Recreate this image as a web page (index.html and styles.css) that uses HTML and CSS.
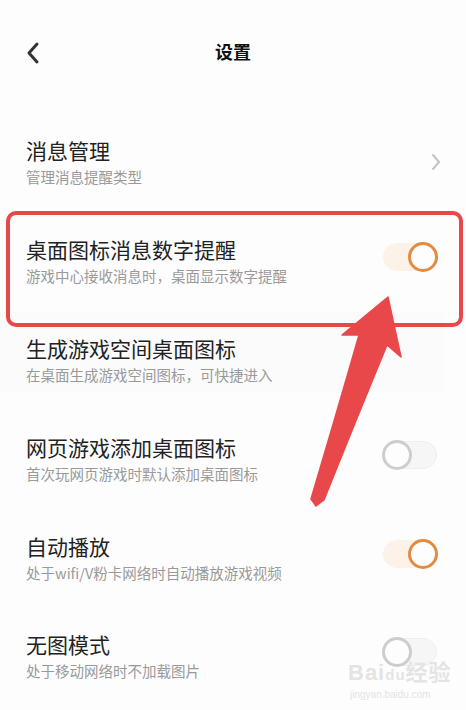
FILE: index.html
```html
<!DOCTYPE html>
<html lang="zh-CN">
<head>
    <meta charset="UTF-8">
    <meta name="viewport" content="width=device-width, initial-scale=1.0">
    <title>设置</title>
    <link rel="stylesheet" href="styles.css">
</head>
<body>
    <div class="page">
        <div class="top-bar">
            <button class="back-button">
                <svg width="16" height="24" viewBox="0 0 16 24" fill="none" stroke="currentColor" stroke-width="3" stroke-linecap="round" stroke-linejoin="round">
                    <polyline points="12,3 4,12 12,21"/>
                </svg>
            </button>
            <h1 class="page-title">设置</h1>
        </div>

        <div class="setting-list">
            <div class="setting-row">
                <div class="setting-text">
                    <div class="setting-title">消息管理</div>
                    <div class="setting-desc">管理消息提醒类型</div>
                </div>
                <svg class="chevron" width="12" height="18" viewBox="0 0 12 18" fill="none" stroke="currentColor" stroke-width="2" stroke-linecap="round" stroke-linejoin="round">
                    <polyline points="3,2 9,9 3,16"/>
                </svg>
            </div>

            <div class="setting-row">
                <div class="setting-text">
                    <div class="setting-title">桌面图标消息数字提醒</div>
                    <div class="setting-desc">游戏中心接收消息时，桌面显示数字提醒</div>
                </div>
                <div class="switch on"><span class="knob"></span></div>
            </div>

            <div class="setting-row shaded">
                <div class="setting-text">
                    <div class="setting-title">生成游戏空间桌面图标</div>
                    <div class="setting-desc">在桌面生成游戏空间图标，可快捷进入</div>
                </div>
            </div>

            <div class="setting-row">
                <div class="setting-text">
                    <div class="setting-title">网页游戏添加桌面图标</div>
                    <div class="setting-desc">首次玩网页游戏时默认添加桌面图标</div>
                </div>
                <div class="switch"><span class="knob"></span></div>
            </div>

            <div class="setting-row">
                <div class="setting-text">
                    <div class="setting-title">自动播放</div>
                    <div class="setting-desc">处于wifi/V粉卡网络时自动播放游戏视频</div>
                </div>
                <div class="switch on"><span class="knob"></span></div>
            </div>

            <div class="setting-row">
                <div class="setting-text">
                    <div class="setting-title">无图模式</div>
                    <div class="setting-desc">处于移动网络时不加载图片</div>
                </div>
                <div class="switch"><span class="knob"></span></div>
            </div>
        </div>

        <!-- annotation overlay -->
        <div class="highlight-box"></div>
        <svg class="arrow" width="466" height="710" viewBox="0 0 466 710">
            <path d="M388 297 L401 357 L387 345 Q356 420 324 500 L316 506 L311 499 Q336 415 359 335 L342 335 Z" fill="#e9484b" stroke="#e9484b" stroke-width="1.5" stroke-linejoin="round"/>
        </svg>

        <div class="watermark">
            <div class="wm-logo">Bai<span class="wm-du">du</span>经验</div>
            <div class="wm-url">jingyan.baidu.com</div>
        </div>
    </div>
</body>
</html>
```

FILE: styles.css
```css
* {
    margin: 0;
    padding: 0;
    box-sizing: border-box;
}

body {
    background: #fdfdfd;
    font-family: "Noto Sans CJK SC", "Noto Sans", sans-serif;
    color: #222;
}

.page {
    position: relative;
    width: 466px;
    height: 710px;
    overflow: hidden;
}

.top-bar {
    height: 113px;
    display: flex;
    align-items: flex-start;
    padding-top: 38px;
    position: relative;
}

.back-button {
    background: none;
    border: none;
    color: #333;
    margin-left: 25px;
    margin-top: 3px;
    display: flex;
}

.page-title {
    position: absolute;
    left: 0;
    right: 0;
    top: 37px;
    text-align: center;
    font-size: 18px;
    font-weight: 700;
    line-height: 28px;
    color: #111;
}

.setting-list {
    display: flex;
    flex-direction: column;
}

.setting-row {
    height: 98.8px;
    display: flex;
    align-items: center;
    justify-content: space-between;
    padding: 0 29px 0 26px;
}

.setting-row.shaded {
    background: linear-gradient(#fbfbfb, #fbfbfb) no-repeat 0 0 / 444px 80px;
}

.setting-text {
    display: flex;
    flex-direction: column;
    gap: 4px;
}

.setting-title {
    font-size: 21px;
    line-height: 26px;
    color: #222;
}

.setting-desc {
    font-size: 14.5px;
    line-height: 20px;
    color: #9a9a9a;
}

.chevron {
    color: #c4c4c4;
    margin-right: -5px;
}

.switch {
    width: 54px;
    height: 28px;
    border-radius: 14px;
    background: #f6f6f6;
    border: 1px solid #efefef;
    display: flex;
    align-items: center;
    margin-bottom: 8px;
}

.knob {
    width: 30px;
    height: 30px;
    border-radius: 50%;
    background: #fdfdfd;
    border: 3.5px solid #cdcdcd;
    margin-left: -2px;
}

.switch.on {
    background: #fdf2e8;
    border-color: #fdf2e8;
    justify-content: flex-end;
}

.switch.on .knob {
    border-color: #e38b40;
    margin-left: 0;
    margin-right: -2px;
}

.highlight-box {
    position: absolute;
    left: 6px;
    top: 211px;
    width: 457px;
    height: 116px;
    border: 4px solid #e9484b;
    border-radius: 10px;
}

.arrow {
    position: absolute;
    left: 0;
    top: 0;
}

.watermark {
    position: absolute;
    left: 348px;
    top: 660px;
    color: #e4e4e4;
    font-family: "Liberation Sans", "Noto Sans CJK SC", sans-serif;
}

.wm-logo {
    font-size: 22px;
    font-weight: 700;
    line-height: 26px;
    letter-spacing: 1px;
}

.wm-du {
    font-size: 15px;
}

.wm-url {
    font-size: 10px;
    line-height: 14px;
    padding-left: 2px;
}
```
